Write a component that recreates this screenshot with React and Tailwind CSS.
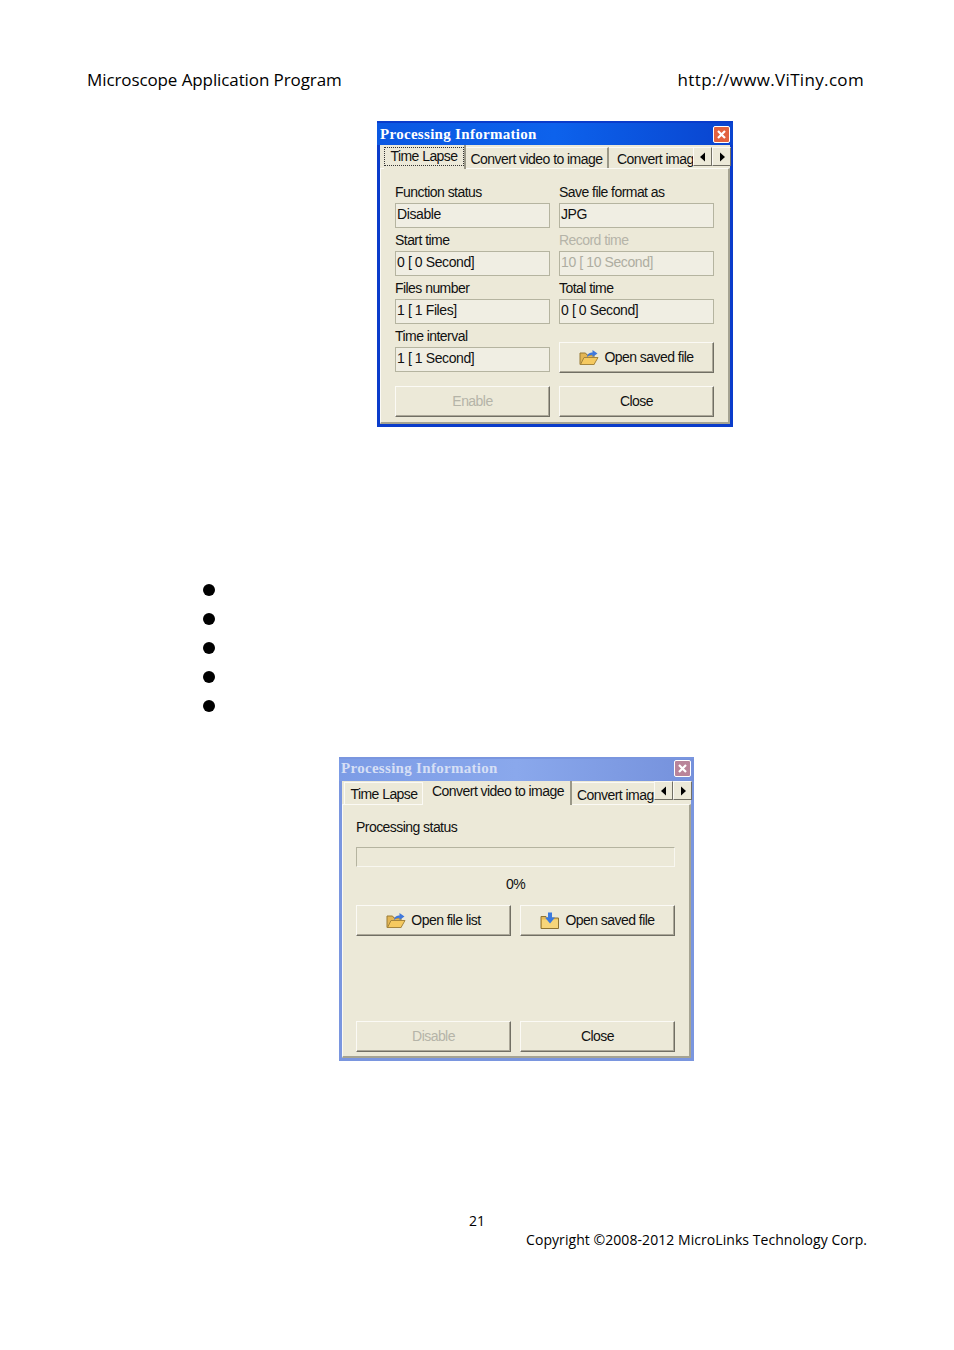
const winFont = { fontFamily: '"Liberation Sans", sans-serif' };

// ─── Small icons ──────────────────────────────────────────────────────────────

const FolderArrow = () => (
  <svg width="20" height="17" viewBox="0 0 20 17" className="shrink-0">
    <path d="M1 4 L1 15.5 L15 15.5 L15 6 L8 6 L6.5 4 Z" fill="#e3b655" stroke="#9a7a35" strokeWidth="1" />
    <path d="M1.5 15.5 L5 8.5 L19 8.5 L15 15.5 Z" fill="#f5c95f" stroke="#a5853c" strokeWidth="1" />
    <path d="M8 8 C8.5 4.5 11 3.5 13.5 3.5 L13.5 1 L18.5 4.5 L13.5 8 L13.5 5.7 C11.5 5.7 10 6.5 8 8 Z" fill="#3f78dc" />
  </svg>
);

const FolderDown = () => (
  <svg width="20" height="18" viewBox="0 0 20 18" className="shrink-0">
    <path d="M1 4.5 L6 4.5 L7.5 6 L18.5 6 L18.5 16.5 L1 16.5 Z" fill="#e8bb55" stroke="#8f7432" strokeWidth="1" />
    <path d="M2 7.5 L18 7.5 L18 16 L2 16 Z" fill="#f7d67a" />
    <path d="M8 0.5 L12 0.5 L12 5.5 L15 5.5 L10 11.5 L5 5.5 L8 5.5 Z" fill="#3a7ae0" />
  </svg>
);

const CloseBox = ({ dim }) => (
  <div className={`flex h-[17px] w-[17px] items-center justify-center rounded-[2px] border border-white ${dim ? 'bg-[#b9849a]' : 'bg-[#e2623f]'}`}>
    <svg width="11" height="11" viewBox="0 0 11 11">
      <path d="M2 2 L9 9 M9 2 L2 9" stroke="white" strokeWidth="2.2" />
    </svg>
  </div>
);

const ScrollArrows = ({ className }) => (
  <div className={`absolute -right-px flex h-[19px] ${className}`}>
    {['M7 0.5 L7 9.5 L2 5 Z', 'M3 0.5 L3 9.5 L8 5 Z'].map((d) => (
      <div key={d} className="flex h-[19px] w-[19px] items-center justify-center border border-[#fbfaf5] border-r-[#716f64] border-b-[#716f64] bg-[#ece9d8]">
        <svg width="10" height="10" viewBox="0 0 10 10"><path d={d} fill="black" /></svg>
      </div>
    ))}
  </div>
);

// ─── Win32 controls ───────────────────────────────────────────────────────────

const Field = ({ label, value, disabled }) => (
  <div className="h-[48px]">
    <div className={`h-[24px] pt-[5px] text-[14px] leading-[16px] tracking-[-0.55px] ${disabled ? 'text-[#b5b4a8]' : 'text-[#111]'}`}>{label}</div>
    <div className={`h-[25px] border border-[#b5b4a0] bg-[#f0eee3] pl-[1px] text-[14px] leading-[21px] tracking-[-0.4px] ${disabled ? 'text-[#aeada1]' : 'text-[#111]'}`}>
      {value}
    </div>
  </div>
);

const Button = ({ children, disabled }) => (
  <div className={`flex h-[31px] items-center justify-center gap-[5px] border border-[#fbfaf5] border-r-[#716f64] border-b-[#716f64] bg-[#ece9d8] text-[14px] tracking-[-0.55px] shadow-[inset_-1px_-1px_0_#aca899] ${disabled ? 'text-[#b5b4a8]' : 'text-[#111]'}`}>
    {children}
  </div>
);

const Tab = ({ className, children }) => (
  <div className={`flex shrink-0 items-center justify-center whitespace-nowrap border-r-2 border-r-[#9a9888] text-[14px] tracking-[-0.55px] text-[#111] ${className}`}>
    {children}
  </div>
);

const Window = ({ inactive, tabs, arrowsTop, children }) => (
  <div className={`border-[3px] border-t-2 ${inactive ? 'h-[304px] w-[355px] border-[#7a96df]' : 'h-[306px] w-[356px] border-[#0a3ccb]'}`}>
    <div
      className={`-mx-[3px] flex h-[22px] items-center justify-between px-[3px] text-[15px] font-bold tracking-[0.3px] ${inactive ? 'bg-gradient-to-r from-[#7c9ce6] via-[#8aa8ec] to-[#7591dc] pb-[3px]' : 'bg-gradient-to-r from-[#0b58e2] via-[#0d62ec] to-[#0a44cf]'}`}
      style={{ fontFamily: '"Liberation Serif", serif' }}
    >
      <span className={inactive ? '-ml-px text-[#d6dff5]' : 'text-white'}>Processing Information</span>
      <CloseBox dim={inactive} />
    </div>
    <div className="relative flex h-[23px] bg-[#ece9d8]" style={winFont}>
      {tabs}
      <ScrollArrows className={arrowsTop} />
    </div>
    <div className={`border-b-2 border-l border-r-2 border-t border-b-[#a5a392] border-l-[#fbfaf5] border-r-[#a5a392] border-t-[#fbfaf5] bg-[#ece9d8] ${inactive ? 'h-[254px]' : 'h-[256px]'}`} style={winFont}>
      {children}
    </div>
  </div>
);

// ─── Panels ───────────────────────────────────────────────────────────────────

const TimeLapsePanel = () => (
  <div className="px-[14px] pt-[10px]">
    <div className="grid grid-cols-2 gap-x-[9px]">
      <div>
        <Field label="Function status" value="Disable" />
        <Field label="Start time" value="0 [ 0 Second]" />
        <Field label="Files number" value="1 [ 1 Files]" />
        <Field label="Time interval" value="1 [ 1 Second]" />
      </div>
      <div>
        <Field label="Save file format as" value="JPG" />
        <Field label="Record time" value="10 [ 10 Second]" disabled />
        <Field label="Total time" value="0 [ 0 Second]" />
        <div className="h-[48px] pt-[19px]">
          <Button><FolderArrow />Open saved file</Button>
        </div>
      </div>
    </div>
    <div className="mt-[15px] grid grid-cols-2 gap-x-[9px]">
      <Button disabled>Enable</Button>
      <Button>Close</Button>
    </div>
  </div>
);

const ConvertPanel = () => (
  <div className="pl-[13px] pr-[14px] pt-[14px]">
    <div className="text-[14px] leading-[16px] tracking-[-0.55px] text-[#111]">Processing status</div>
    <div className="mt-[12px] h-[20px] border border-[#b5b4a0] border-b-[#f8f7f0] border-r-[#f8f7f0]" />
    <div className="mt-[9px] h-[16px] text-center text-[14px] leading-[16px] tracking-[-0.55px] text-[#111]">0%</div>
    <div className="mt-[13px] grid grid-cols-2 gap-x-[9px]">
      <Button><FolderArrow />Open file list</Button>
      <Button><FolderDown />Open saved file</Button>
    </div>
    <div className="mt-[85px] grid grid-cols-2 gap-x-[9px]">
      <Button disabled>Disable</Button>
      <Button>Close</Button>
    </div>
  </div>
);

// ─── Page ─────────────────────────────────────────────────────────────────────

const App = () => (
  <div className="h-[1350px] w-[954px] overflow-hidden bg-white pt-[69px] text-black" style={{ fontFamily: '"Open Sans", sans-serif' }}>
    <div className="flex justify-between pl-[87px] pr-[90px] text-[17px] leading-[22px]">
      <span className="tracking-[-0.1px]">Microscope Application Program</span>
      <span className="tracking-[0.33px]">http://www.ViTiny.com</span>
    </div>

    <div className="ml-[377px] mt-[30px]">
      <Window
        arrowsTop="top-[2px]"
        tabs={
          <>
            <div className="w-[4px] shrink-0" />
            <Tab className="relative z-10 -mb-px h-[24px] w-[82px] bg-[#ece9d8] pb-px">
              <span className="border border-dotted border-[#333] px-[5px] leading-[17px]">Time Lapse</span>
            </Tab>
            <Tab className="mt-[2px] h-[21px] w-[143px] border-t border-t-[#fbfaf5] pt-[3px]">Convert video to image</Tab>
            <div className="mt-[2px] whitespace-nowrap border-t border-t-[#fbfaf5] pl-[8px] pt-[3px] text-[14px] leading-[17px] tracking-[-0.55px] text-[#111]">Convert image</div>
          </>
        }
      >
        <TimeLapsePanel />
      </Window>
    </div>

    <div className="ml-[203px] mt-[157px] flex flex-col gap-[17px]">
      {[0, 1, 2, 3, 4].map((i) => (
        <div key={i} className="h-[12px] w-[12px] rounded-full bg-black" />
      ))}
    </div>

    <div className="ml-[339px] mt-[45px]">
      <Window
        inactive
        arrowsTop="top-0"
        tabs={
          <>
            <div className="w-[2px] shrink-0" />
            <div className="mt-[1px] flex h-[22px] w-[79px] shrink-0 items-center justify-center border border-b-0 border-[#fbfaf5] pl-[1px] pt-[1px] text-[14px] tracking-[-0.55px] text-[#111]">Time Lapse</div>
            <Tab className="relative z-10 -mb-px h-[24px] w-[149px] bg-[#ece9d8] pb-[3px] pl-[3px]">Convert video to image</Tab>
            <div className="mt-[1px] whitespace-nowrap border-t border-t-[#fbfaf5] pl-[5px] pt-[4px] text-[14px] leading-[17px] tracking-[-0.55px] text-[#111]">Convert image</div>
          </>
        }
      >
        <ConvertPanel />
      </Window>
    </div>

    <div className="mt-[150px] text-center text-[14px] leading-[19px]">21</div>
    <div className="pr-[87px] text-right text-[14px] leading-[19px] tracking-[0.06px]">Copyright ©2008-2012 MicroLinks Technology Corp.</div>
  </div>
);

export default App;
